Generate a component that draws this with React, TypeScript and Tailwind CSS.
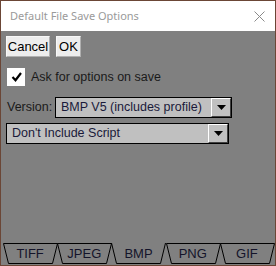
import React from "react";

const TABS = ["TIFF", "JPEG", "BMP", "PNG", "GIF"];
const SELECTED = "BMP";

function DropArrow() {
  return (
    <div className="flex h-full w-[20px] items-center justify-center border-t border-l border-t-white border-l-white border-r border-b border-r-[#404040] border-b-[#404040] bg-[#c0c0c0]">
      <svg width="9" height="5" viewBox="0 0 9 5">
        <path d="M0 0h9L4.5 5z" fill="#000" />
      </svg>
    </div>
  );
}

function Tab({ label, active }: { label: string; active: boolean }) {
  return (
    <div className="relative flex h-[21px] w-[55px] items-center justify-center">
      <svg className="absolute inset-0" width="55" height="21" viewBox="0 0 55 21">
        {active ? (
          <path d="M0.5 0 L5.5 20.5 H49.5 L54.5 0" fill="none" stroke="#000" strokeWidth="1" />
        ) : (
          <path d="M0.5 0.5 L5.5 20.5 H49.5 L54.5 0.5 Z" fill="none" stroke="#000" strokeWidth="1" />
        )}
      </svg>
      <span className="relative text-[13px] text-[#14142a]">{label}</span>
    </div>
  );
}

export default function App() {
  return (
    <div
      className="flex h-[266px] w-[276px] flex-col border border-[#6b4636] bg-[#808080]"
      style={{ fontFamily: "'Liberation Sans', Arial, sans-serif" }}
    >
      <div className="flex h-[30px] shrink-0 items-center justify-between bg-white pl-[9px] pr-[10px]">
        <span className="text-[11px] text-[#9a9a9a]" style={{ fontFamily: "'Noto Sans', 'Liberation Sans', sans-serif" }}>
          Default File Save Options
        </span>
        <svg width="11" height="11" viewBox="0 0 11 11">
          <path d="M0.5 0.5l10 10M10.5 0.5l-10 10" stroke="#8a8a8a" strokeWidth="1" />
        </svg>
      </div>

      <div className="flex flex-1 flex-col px-[5px]">
        <div className="mt-[5px] flex gap-[6px]">
          <button className="h-[21px] w-[44px] border border-[#f8f8f8] border-b-[#b0b0b0] border-r-[#b0b0b0] bg-[#ededed] text-[13px] text-black">
            Cancel
          </button>
          <button className="h-[21px] w-[25px] border border-[#f8f8f8] border-b-[#b0b0b0] border-r-[#b0b0b0] bg-[#ededed] text-[13px] text-black">
            OK
          </button>
        </div>

        <div className="mt-[11px] flex items-center gap-[6px] pl-[1px]">
          <div className="flex h-[18px] w-[18px] items-center justify-center bg-white">
            <svg width="11" height="10" viewBox="0 0 11 10">
              <path d="M1.5 5l3 3.2 5.5-7.2" fill="none" stroke="#000" strokeWidth="2.2" />
            </svg>
          </div>
          <span className="text-[12.5px] text-[#1a1a1a]">Ask for options on save</span>
        </div>

        <div className="mt-[10px] flex items-center pl-[1px]">
          <span className="w-[48px] text-[12.5px] text-[#1a1a1a]">Version:</span>
          <div className="flex h-[21px] w-[177px] items-center border border-black bg-[#c0c0c0]">
            <span className="flex-1 pl-[5px] text-[12.5px] text-[#1a1a3a]">BMP V5 (includes profile)</span>
            <DropArrow />
          </div>
        </div>

        <div className="mt-[5px] flex h-[21px] w-[223px] items-center border border-black bg-[#c0c0c0]">
          <span className="flex-1 pl-[5px] text-[12.5px] text-[#1a1a3a]">Don't Include Script</span>
          <DropArrow />
        </div>

        <div className="flex-1" />

        <div className="mb-[1px] flex -mx-[4px] pl-[1px]">
          {TABS.map((t) => (
            <Tab key={t} label={t} active={t === SELECTED} />
          ))}
        </div>
      </div>
    </div>
  );
}
